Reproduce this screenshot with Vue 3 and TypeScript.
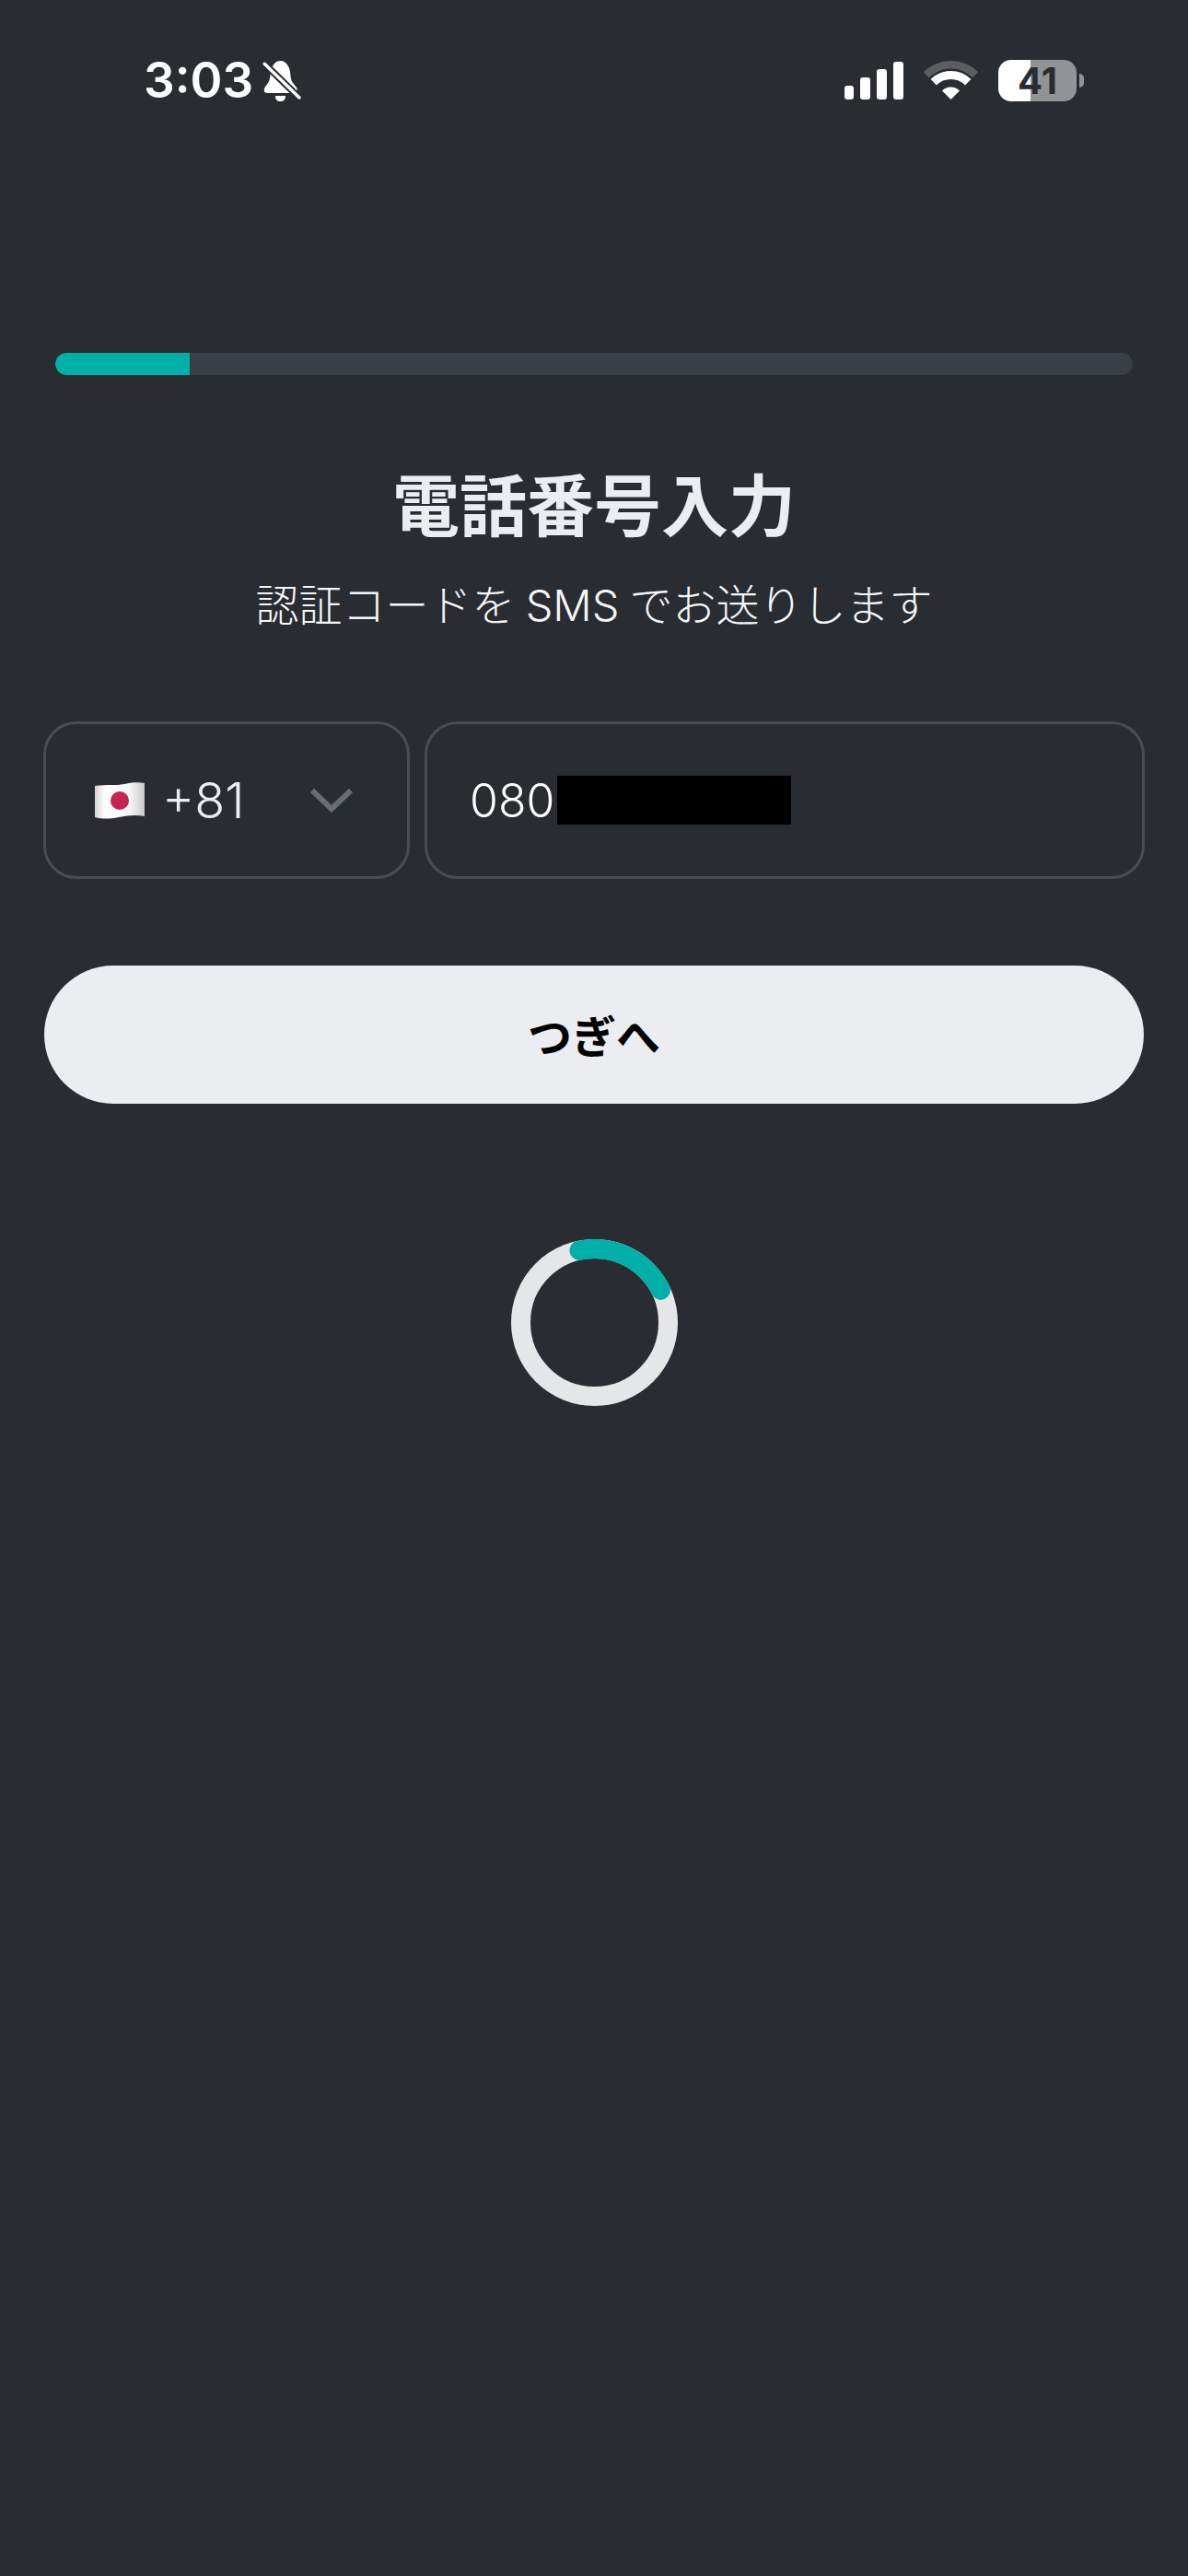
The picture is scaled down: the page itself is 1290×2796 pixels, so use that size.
<script setup lang="ts">
const progress = 12.5
const dialCode = '+81'
const phonePrefix = '080'
</script>

<template>
  <div class="screen">
    <div class="status-bar">
      <div class="status-left">
        <span class="time">3:03</span>
        <svg class="bell" width="42" height="45" viewBox="0 0 42 45">
          <path
            fill="#fff"
            d="M19.500 1C24 1 27 4 29 9C31 15 30 21 33 25L37 30C38.500 33 37 36 34 36H5C2 36 1 33 2.500 30L6 25C9 21 8 15 10 9C12 4 15 1 19.500 1Z"
          />
          <path fill="#fff" d="M14 39H25C25 43 23 45 19.500 45C16 45 14 43 14 39Z" />
          <path d="M1 3L41 42" stroke="#292c31" stroke-width="7.500" />
          <path d="M2.300 4.300L40 41" stroke="#fff" stroke-width="3.500" stroke-linecap="round" />
        </svg>
      </div>
      <div class="status-right">
        <svg width="64" height="41" viewBox="0 0 64 41" fill="#fff">
          <rect x="0" y="26" width="10" height="15" rx="3" />
          <rect x="17" y="17" width="11" height="24" rx="3" />
          <rect x="35" y="8" width="11" height="33" rx="3" />
          <rect x="53" y="0" width="11" height="41" rx="3" />
        </svg>
        <svg width="59" height="43" viewBox="0 0 59 43" fill="none">
          <path d="M2.800 15.300A37.750 37.750 0 0 1 56.200 15.300" stroke="#5b5d61" stroke-width="8.500" />
          <path d="M10.800 23.300A26.500 26.500 0 0 1 48.200 23.300" stroke="#fff" stroke-width="9" />
          <path d="M20 32.500A13.500 13.500 0 0 1 39 32.500L29.500 42Z" fill="#fff" />
        </svg>
        <div class="battery"><span>41</span></div>
      </div>
    </div>

    <div class="progress-track">
      <div class="progress-fill" :style="{ width: progress + '%' }"></div>
    </div>

    <h1 class="title">電話番号入力</h1>
    <p class="subtitle">認証コードを SMS でお送りします</p>

    <div class="phone-row">
      <div class="field country">
        <svg class="flag" width="54" height="40" viewBox="0 0 54 40">
          <defs>
            <linearGradient id="flagShade" x1="0" x2="1" y1="0" y2="0">
              <stop offset="0" stop-color="#d4d4d4" />
              <stop offset="0.2" stop-color="#ffffff" />
              <stop offset="0.7" stop-color="#f6f6f6" />
              <stop offset="1" stop-color="#c8c8c8" />
            </linearGradient>
          </defs>
          <path
            fill="url(#flagShade)"
            d="M0 4C14 2 22 4 32 2C40 0 48 0 54 1V37C44 35 36 36 26 38C16 40 8 40 0 38Z"
          />
          <circle cx="27" cy="20" r="10" fill="#c6244c" />
        </svg>
        <span class="dial-code">{{ dialCode }}</span>
        <svg class="chevron" width="46" height="27" viewBox="0 0 46 27" fill="none">
          <path d="M2 3L23 23L44 3" stroke="#666e70" stroke-width="6" />
        </svg>
      </div>
      <div class="field phone">
        <span class="phone-text">{{ phonePrefix }}</span>
        <div class="redacted"></div>
      </div>
    </div>

    <button class="next-button">つぎへ</button>

    <svg class="spinner" width="181" height="181" viewBox="0 0 181 181" fill="none">
      <circle cx="90.500" cy="90.500" r="80" stroke="#e4e6e8" stroke-width="21" />
      <path
        d="M73.900 12.250A80 80 0 0 1 162.400 55.400"
        stroke="#00b0a8"
        stroke-width="21"
        stroke-linecap="round"
      />
    </svg>
  </div>
</template>

<style scoped>
.screen {
  width: 1290px;
  min-height: 2796px;
  background-color: #292c31;
  display: flex;
  flex-direction: column;
  font-family: Inter, 'Noto Sans CJK JP', sans-serif;
  color: #ecedf1;
}

.status-bar {
  height: 174px;
  padding: 0 121px 0 156px;
  display: flex;
  align-items: center;
  justify-content: space-between;
}

.status-left {
  display: flex;
  align-items: center;
  gap: 10px;
}

.time {
  font-size: 53px;
  font-weight: 600;
  color: #fff;
  line-height: 1;
}

.status-right {
  display: flex;
  align-items: center;
  gap: 22px;
}

.battery {
  position: relative;
  width: 85px;
  height: 45px;
  border-radius: 14px;
  background: linear-gradient(to right, #fff 41%, #929395 41%);
  display: flex;
  align-items: center;
  justify-content: center;
  color: #292c31;
  font-size: 40px;
  font-weight: 700;
}

.battery::after {
  content: '';
  position: absolute;
  left: 88px;
  top: 15px;
  width: 5px;
  height: 15px;
  border-radius: 0 8px 8px 0;
  background-color: #929395;
}

.progress-track {
  margin: 209px 60px 0;
  height: 24px;
  border-radius: 12px;
  background-color: #3a3e45;
  overflow: hidden;
}

.progress-fill {
  height: 100%;
  background-color: #00b0a8;
  border-radius: 12px 0 0 12px;
}

.title {
  margin: 93px 0 0;
  text-align: center;
  font-size: 73px;
  font-weight: 700;
  line-height: 100px;
}

.subtitle {
  margin: 27px 0 0;
  text-align: center;
  font-size: 47px;
  font-weight: 300;
  line-height: 60px;
  word-spacing: -2px;
  color: #f6f7f9;
}

.phone-row {
  display: flex;
  gap: 16px;
  margin-top: 96px;
  padding: 0 47px;
}

.field {
  box-sizing: border-box;
  height: 171px;
  border: 3px solid #4a4d51;
  border-radius: 36px;
  display: flex;
  align-items: center;
}

.country {
  width: 398px;
  flex-shrink: 0;
  padding-left: 53px;
}

.dial-code {
  margin-left: 19px;
  font-size: 54px;
  font-weight: 300;
}

.chevron {
  margin-left: 71px;
}

.phone {
  flex: 1;
  padding-left: 46px;
}

.phone-text {
  font-size: 50px;
  font-weight: 300;
  color: #fff;
}

.redacted {
  width: 254px;
  height: 53px;
  margin-left: 3px;
  background-color: #000;
}

.next-button {
  margin: 94px 48px 0;
  height: 150px;
  padding: 0 0 2px;
  border: none;
  border-radius: 75px;
  background-color: #ecedf1;
  color: #000;
  font-family: inherit;
  font-size: 48px;
  font-weight: 700;
}

.spinner {
  align-self: center;
  margin-top: 147px;
}
</style>
